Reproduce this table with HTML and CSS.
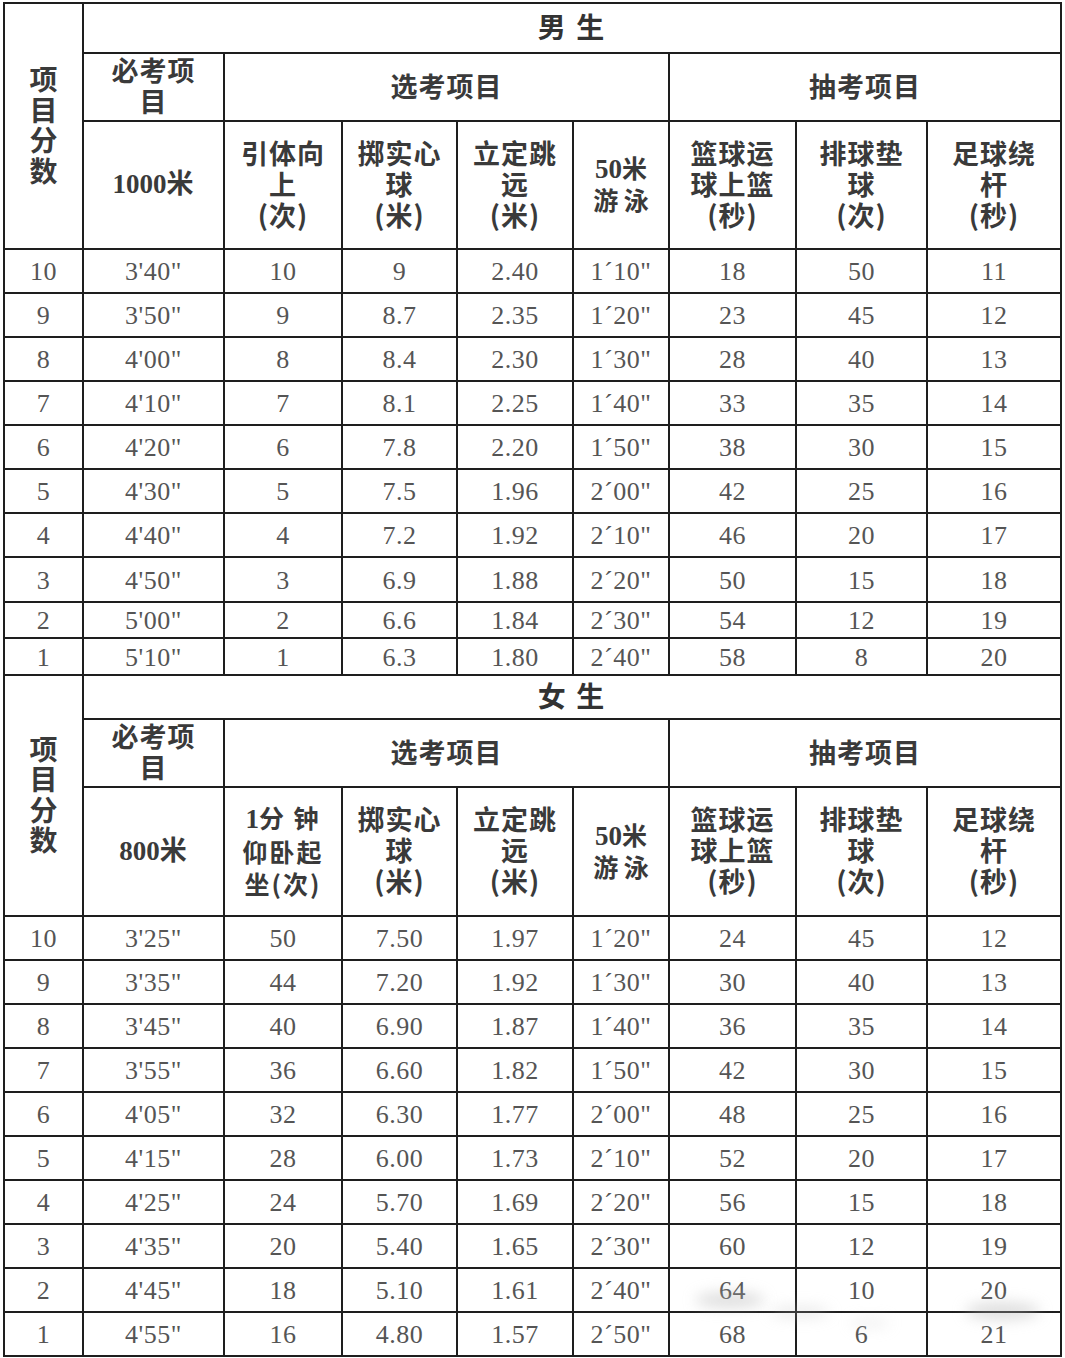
FILE: index.html
```html
<!DOCTYPE html>
<html lang="zh">
<head>
<meta charset="utf-8">
<title>体育考试评分标准</title>
<link rel="stylesheet" href="styles.css">
</head>
<body>
<div class="wrap">
<div class="sheet">
  <!-- 男生 -->
  <div class="c lab rs3"><span class="t">项<br>目<br>分<br>数</span></div>
  <div class="c title cs8"><span class="t">男 生</span></div>
  <div class="c h"><span class="t">必考项<br>目</span></div>
  <div class="c h cs4"><span class="t">选考项目</span></div>
  <div class="c h cs3"><span class="t">抽考项目</span></div>
  <div class="c h"><span class="t"><span class="bnum">1000</span>米</span></div>
  <div class="c h"><span class="t">引体向<br>上<br>(次)</span></div>
  <div class="c h"><span class="t">掷实心<br>球<br>(米)</span></div>
  <div class="c h"><span class="t">立定跳<br>远<br>(米)</span></div>
  <div class="c h sm"><span class="t"><span class="bnum">50</span>米<br>游 泳</span></div>
  <div class="c h"><span class="t">篮球运<br>球上篮<br>(秒)</span></div>
  <div class="c h"><span class="t">排球垫<br>球<br>(次)</span></div>
  <div class="c h"><span class="t">足球绕<br>杆<br>(秒)</span></div>

  <div class="c n">10</div><div class="c n">3'40"</div><div class="c n">10</div><div class="c n">9</div><div class="c n">2.40</div><div class="c n">1´10"</div><div class="c n">18</div><div class="c n">50</div><div class="c n">11</div>
  <div class="c n">9</div><div class="c n">3'50"</div><div class="c n">9</div><div class="c n">8.7</div><div class="c n">2.35</div><div class="c n">1´20"</div><div class="c n">23</div><div class="c n">45</div><div class="c n">12</div>
  <div class="c n">8</div><div class="c n">4'00"</div><div class="c n">8</div><div class="c n">8.4</div><div class="c n">2.30</div><div class="c n">1´30"</div><div class="c n">28</div><div class="c n">40</div><div class="c n">13</div>
  <div class="c n">7</div><div class="c n">4'10"</div><div class="c n">7</div><div class="c n">8.1</div><div class="c n">2.25</div><div class="c n">1´40"</div><div class="c n">33</div><div class="c n">35</div><div class="c n">14</div>
  <div class="c n">6</div><div class="c n">4'20"</div><div class="c n">6</div><div class="c n">7.8</div><div class="c n">2.20</div><div class="c n">1´50"</div><div class="c n">38</div><div class="c n">30</div><div class="c n">15</div>
  <div class="c n">5</div><div class="c n">4'30"</div><div class="c n">5</div><div class="c n">7.5</div><div class="c n">1.96</div><div class="c n">2´00"</div><div class="c n">42</div><div class="c n">25</div><div class="c n">16</div>
  <div class="c n">4</div><div class="c n">4'40"</div><div class="c n">4</div><div class="c n">7.2</div><div class="c n">1.92</div><div class="c n">2´10"</div><div class="c n">46</div><div class="c n">20</div><div class="c n">17</div>
  <div class="c n">3</div><div class="c n">4'50"</div><div class="c n">3</div><div class="c n">6.9</div><div class="c n">1.88</div><div class="c n">2´20"</div><div class="c n">50</div><div class="c n">15</div><div class="c n">18</div>
  <div class="c n">2</div><div class="c n">5'00"</div><div class="c n">2</div><div class="c n">6.6</div><div class="c n">1.84</div><div class="c n">2´30"</div><div class="c n">54</div><div class="c n">12</div><div class="c n">19</div>
  <div class="c n">1</div><div class="c n">5'10"</div><div class="c n">1</div><div class="c n">6.3</div><div class="c n">1.80</div><div class="c n">2´40"</div><div class="c n">58</div><div class="c n">8</div><div class="c n">20</div>

  <!-- 女生 -->
  <div class="c lab rs3"><span class="t">项<br>目<br>分<br>数</span></div>
  <div class="c title cs8"><span class="t">女 生</span></div>
  <div class="c h"><span class="t">必考项<br>目</span></div>
  <div class="c h cs4"><span class="t">选考项目</span></div>
  <div class="c h cs3"><span class="t">抽考项目</span></div>
  <div class="c h"><span class="t"><span class="bnum">800</span>米</span></div>
  <div class="c h wide"><span class="t"><span class="bnum">1</span>分 钟<br>仰卧起<br>坐(次)</span></div>
  <div class="c h"><span class="t">掷实心<br>球<br>(米)</span></div>
  <div class="c h"><span class="t">立定跳<br>远<br>(米)</span></div>
  <div class="c h sm"><span class="t"><span class="bnum">50</span>米<br>游 泳</span></div>
  <div class="c h"><span class="t">篮球运<br>球上篮<br>(秒)</span></div>
  <div class="c h"><span class="t">排球垫<br>球<br>(次)</span></div>
  <div class="c h"><span class="t">足球绕<br>杆<br>(秒)</span></div>

  <div class="c n">10</div><div class="c n">3'25"</div><div class="c n">50</div><div class="c n">7.50</div><div class="c n">1.97</div><div class="c n">1´20"</div><div class="c n">24</div><div class="c n">45</div><div class="c n">12</div>
  <div class="c n">9</div><div class="c n">3'35"</div><div class="c n">44</div><div class="c n">7.20</div><div class="c n">1.92</div><div class="c n">1´30"</div><div class="c n">30</div><div class="c n">40</div><div class="c n">13</div>
  <div class="c n">8</div><div class="c n">3'45"</div><div class="c n">40</div><div class="c n">6.90</div><div class="c n">1.87</div><div class="c n">1´40"</div><div class="c n">36</div><div class="c n">35</div><div class="c n">14</div>
  <div class="c n">7</div><div class="c n">3'55"</div><div class="c n">36</div><div class="c n">6.60</div><div class="c n">1.82</div><div class="c n">1´50"</div><div class="c n">42</div><div class="c n">30</div><div class="c n">15</div>
  <div class="c n">6</div><div class="c n">4'05"</div><div class="c n">32</div><div class="c n">6.30</div><div class="c n">1.77</div><div class="c n">2´00"</div><div class="c n">48</div><div class="c n">25</div><div class="c n">16</div>
  <div class="c n">5</div><div class="c n">4'15"</div><div class="c n">28</div><div class="c n">6.00</div><div class="c n">1.73</div><div class="c n">2´10"</div><div class="c n">52</div><div class="c n">20</div><div class="c n">17</div>
  <div class="c n">4</div><div class="c n">4'25"</div><div class="c n">24</div><div class="c n">5.70</div><div class="c n">1.69</div><div class="c n">2´20"</div><div class="c n">56</div><div class="c n">15</div><div class="c n">18</div>
  <div class="c n">3</div><div class="c n">4'35"</div><div class="c n">20</div><div class="c n">5.40</div><div class="c n">1.65</div><div class="c n">2´30"</div><div class="c n">60</div><div class="c n">12</div><div class="c n">19</div>
  <div class="c n">2</div><div class="c n">4'45"</div><div class="c n">18</div><div class="c n">5.10</div><div class="c n">1.61</div><div class="c n">2´40"</div><div class="c n">64</div><div class="c n">10</div><div class="c n">20</div>
  <div class="c n">1</div><div class="c n">4'55"</div><div class="c n">16</div><div class="c n">4.80</div><div class="c n">1.57</div><div class="c n">2´50"</div><div class="c n">68</div><div class="c n">6</div><div class="c n">21</div>
</div>
<div class="wm">
  <span class="blob b1"></span>
  <span class="blob b2"></span>
  <span class="blob b3"></span>
  <span class="blob b4"></span>
</div>
</div>
</body>
</html>
```

FILE: styles.css
```css
html, body {
  margin: 0;
  padding: 0;
  background: #ffffff;
}

.wrap {
  position: relative;
  width: 1065px;
  height: 1358px;
  overflow: hidden;
}

.sheet {
  margin: 2px 0 0 3px;
  width: 1059px;
  box-sizing: border-box;
  padding: 2px;
  background: #1e1e1e;
  display: grid;
  gap: 2px;
  grid-template-columns: 77px 139px 116px 113px 114px 94px 125px 129px 132px;
  grid-template-rows:
    48px 66px 126px
    42px 42px 42px 42px 42px 42px 42px 43px 34px 35px
    42px 66px 127px
    42px 42px 42px 42px 42px 42px 42px 42px 42px 42px;
}

.c {
  background: #ffffff;
  display: flex;
  align-items: center;
  justify-content: center;
  text-align: center;
}

.t {
  display: block;
}

.rs3 { grid-row: span 3; }
.cs8 { grid-column: span 8; }
.cs4 { grid-column: span 4; }
.cs3 { grid-column: span 3; }

.lab {
  font-family: "Noto Sans CJK SC", sans-serif;
  font-size: 28px;
  font-weight: 700;
  line-height: 30.5px;
  color: #3a3a3a;
  padding-bottom: 4px;
}

.title {
  font-family: "Noto Sans CJK SC", sans-serif;
  font-size: 28px;
  font-weight: 700;
  color: #333333;
  letter-spacing: 2px;
  padding-bottom: 5px;
}

.h {
  font-family: "Noto Sans CJK SC", sans-serif;
  font-size: 27px;
  font-weight: 700;
  line-height: 31px;
  letter-spacing: 1px;
  color: #3a3a3a;
  padding-bottom: 4px;
}

.h.sm {
  font-size: 25px;
  line-height: 30px;
  letter-spacing: 0;
}

.h.wide {
  font-size: 25px;
  letter-spacing: 2px;
  line-height: 32px;
}

.bnum {
  font-family: "Liberation Serif", serif;
  font-weight: bold;
  font-size: 27px;
  letter-spacing: 0;
}

.n {
  font-family: "Liberation Serif", serif;
  font-size: 26px;
  color: #555555;
  letter-spacing: 0.5px;
  padding-top: 2px;
}

.wm {
  position: absolute;
  left: 0;
  top: 0;
  width: 100%;
  height: 100%;
  pointer-events: none;
}

.blob {
  position: absolute;
  display: block;
  border-radius: 50%;
  background: rgba(175, 175, 175, 0.4);
  filter: blur(7px);
}

.b1 { left: 695px; top: 1292px; width: 70px; height: 16px; }
.b2 { left: 770px; top: 1306px; width: 60px; height: 12px; background: rgba(190, 190, 190, 0.3); }
.b3 { left: 965px; top: 1302px; width: 75px; height: 18px; }
.b4 { left: 850px; top: 1318px; width: 40px; height: 10px; background: rgba(200, 200, 200, 0.25); }
```
